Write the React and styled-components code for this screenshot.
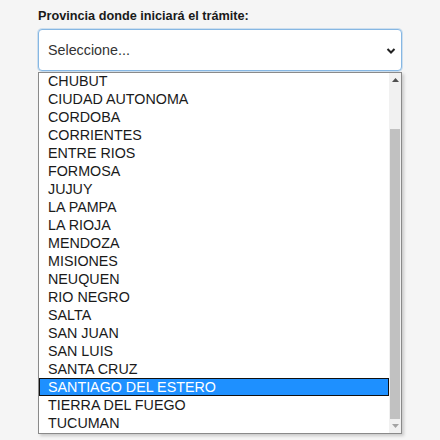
import React from 'react'
import styled, { createGlobalStyle, css } from 'styled-components'

const GlobalStyle = createGlobalStyle`
  html, body {
    margin: 0;
    background: #f5f5f5;
    font-family: "Liberation Sans", Arial, sans-serif;
    color: #222;
  }
`

const Page = styled.div`
  padding: 8px 38px;
`

const Label = styled.label`
  display: block;
  font-size: 12.7px;
  line-height: 16px;
  font-weight: bold;
  color: #1a1a1a;
  margin-bottom: 5px;
`

const SelectBox = styled.div`
  box-sizing: border-box;
  height: 42px;
  display: flex;
  align-items: center;
  justify-content: space-between;
  padding: 0 5px 0 9px;
  background: #fff;
  border: 1px solid #86b7e3;
  border-radius: 4px;
  box-shadow: 0 0 0 1px rgba(134, 183, 227, 0.35);
  font-size: 14.3px;
  color: #333;
`

const Chevron = styled.svg`
  width: 10px;
  height: 8px;
  margin-top: 2px;
`

const ListBox = styled.div`
  box-sizing: border-box;
  margin-top: 1px;
  height: 362px;
  display: flex;
  background: #fff;
  border: 1px solid #8a8a8a;
  box-shadow: 2px 2px 3px rgba(0, 0, 0, 0.18);
`

const Options = styled.div`
  flex: 1;
  overflow: hidden;
`

/* the list is scrolled to the bottom, a pixel of CHUBUT is hidden */
const OptionList = styled.ul`
  margin: -1px 0 0;
  padding: 0;
  list-style: none;
`

const Option = styled.li`
  box-sizing: border-box;
  height: 18px;
  line-height: 18px;
  padding-left: 9px;
  font-size: 14.3px;
  color: #1a1a1a;
  white-space: nowrap;

  ${p =>
    p.selected &&
    css`
      background: #1e90ff;
      color: #fff;
      border: 1px solid #111;
      line-height: 16px;
      padding-left: 8px;
    `}
`

const Scrollbar = styled.div`
  width: 12px;
  display: flex;
  flex-direction: column;
  background: #f1f1f1;
`

const ArrowButton = styled.div`
  height: ${p => p.size}px;
  display: flex;
  align-items: center;
  justify-content: center;
`

const Track = styled.div`
  flex: 1;
`

const Thumb = styled.div`
  height: ${p => p.size}px;
  margin: 0 1px;
  background: #c1c1c1;
`

const provinces = [
  'CHUBUT',
  'CIUDAD AUTONOMA',
  'CORDOBA',
  'CORRIENTES',
  'ENTRE RIOS',
  'FORMOSA',
  'JUJUY',
  'LA PAMPA',
  'LA RIOJA',
  'MENDOZA',
  'MISIONES',
  'NEUQUEN',
  'RIO NEGRO',
  'SALTA',
  'SAN JUAN',
  'SAN LUIS',
  'SANTA CRUZ',
  'SANTIAGO DEL ESTERO',
  'TIERRA DEL FUEGO',
  'TUCUMAN',
]

const Triangle = ({ up, color }) => (
  <svg width="7" height="4" viewBox="0 0 7 4">
    <polygon points={up ? '0,4 7,4 3.5,0' : '0,0 7,0 3.5,4'} fill={color} />
  </svg>
)

export default function App() {
  return (
    <>
      <GlobalStyle />
      <Page>
        <Label>Provincia donde iniciará el trámite:</Label>
        <SelectBox>
          <span>Seleccione...</span>
          <Chevron viewBox="0 0 10 8">
            <polyline points="1.5,2 5,5.5 8.5,2" fill="none" stroke="#222" strokeWidth="2" />
          </Chevron>
        </SelectBox>
        <ListBox>
          <Options>
            <OptionList>
              {provinces.map(name => (
                <Option key={name} selected={name === 'SANTIAGO DEL ESTERO'}>
                  {name}
                </Option>
              ))}
            </OptionList>
          </Options>
          <Scrollbar>
            <ArrowButton size={14}>
              <Triangle up color="#505050" />
            </ArrowButton>
            <Track />
            <Thumb size={290} />
            <ArrowButton size={14}>
              <Triangle color="#a3a3a3" />
            </ArrowButton>
          </Scrollbar>
        </ListBox>
      </Page>
    </>
  )
}
